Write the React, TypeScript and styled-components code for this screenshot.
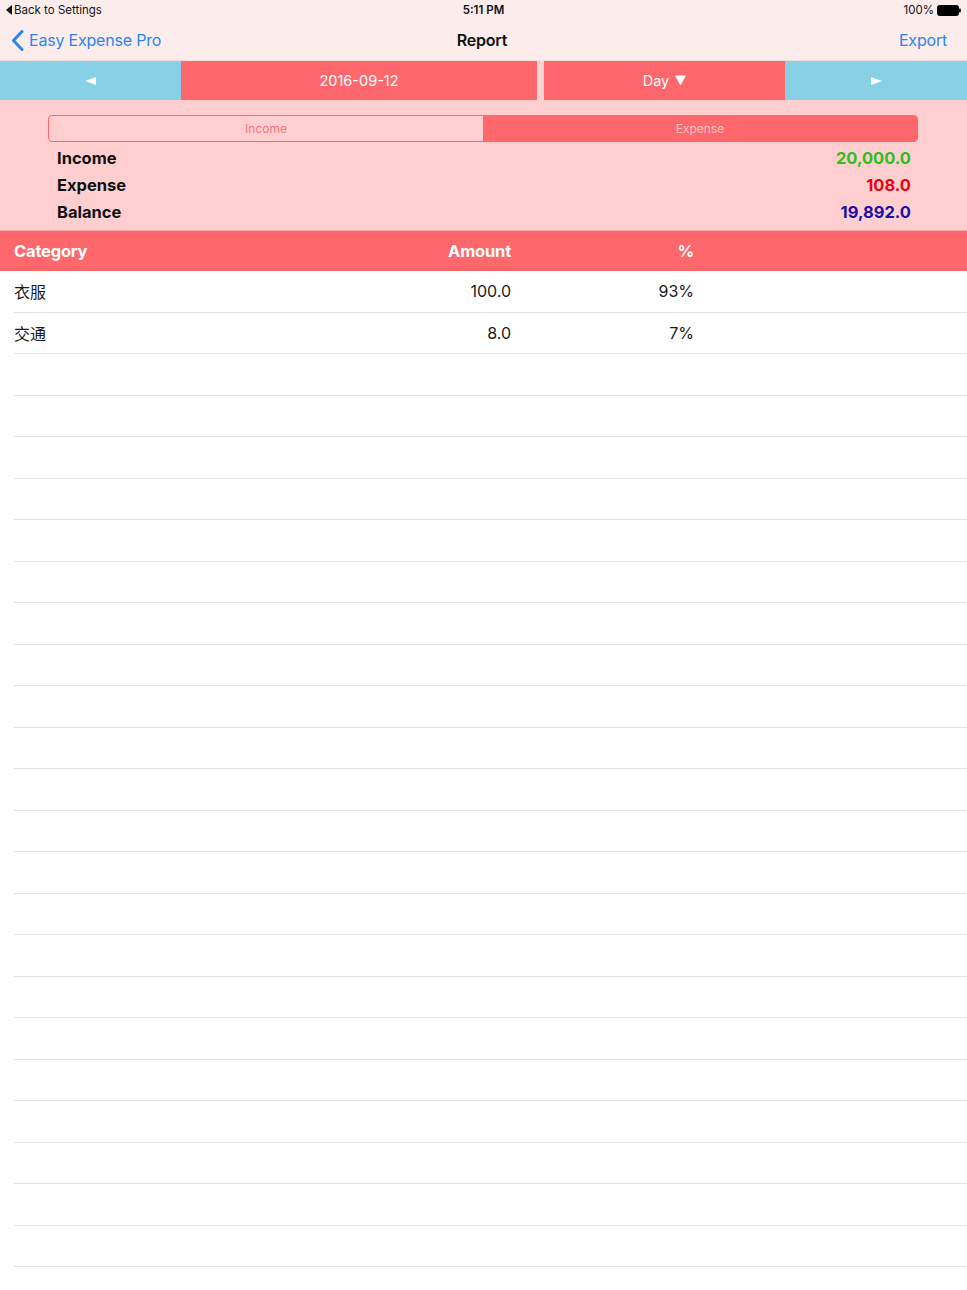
import React from 'react'
import styled, { createGlobalStyle } from 'styled-components'

const GlobalStyle = createGlobalStyle`
  body {
    margin: 0;
    background: #fff;
    font-family: Inter, "Noto Sans", "Noto Sans CJK SC", sans-serif;
    color: #111;
  }
`

const RED = '#fe686c'
const BLUE = '#87d0e5'
const TINT = '#2b85ec'

const categories = [
  { name: '衣服', amount: '100.0', percent: '93%' },
  { name: '交通', amount: '8.0', percent: '7%' },
]

const EMPTY_ROWS = 22

const Page = styled.div`
  width: 967px;
  min-height: 1290px;
  background: #fff;
`

const Header = styled.header`
  background: #fdecec;
  border-bottom: 1px solid #f3dede;
`

const StatusBar = styled.div`
  height: 20px;
  display: grid;
  grid-template-columns: 1fr auto 1fr;
  align-items: center;
  padding: 0 6px 0 6px;
  font-size: 11.5px;
  color: #111;
`

const StatusLeft = styled.div`
  display: flex;
  align-items: center;
  gap: 2px;
`

const StatusTime = styled.div`
  font-weight: 600;
`

const StatusRight = styled.div`
  display: flex;
  justify-content: flex-end;
  align-items: center;
  gap: 3px;
`

const NavBar = styled.div`
  height: 40px;
  display: grid;
  grid-template-columns: 1fr auto 1fr;
  align-items: center;
  padding: 0 20px 0 11px;
  font-size: 16px;
  letter-spacing: -0.2px;
`

const NavBack = styled.div`
  display: flex;
  align-items: center;
  gap: 5px;
  color: ${TINT};
`

const NavTitle = styled.div`
  font-weight: 600;
  margin-left: 6px;
`

const NavAction = styled.div`
  justify-self: end;
  color: ${TINT};
`

const Toolbar = styled.div`
  height: 39px;
  display: flex;
  background: #ffd2d2;
`

const BarButton = styled.div<{ $tone: 'blue' | 'red'; $width?: number; $gap?: number }>`
  display: flex;
  align-items: center;
  justify-content: center;
  gap: 6px;
  background: ${(p) => (p.$tone === 'blue' ? BLUE : RED)};
  color: #fff;
  font-size: 14.5px;
  ${(p) => (p.$width ? `width: ${p.$width}px;` : 'flex: 1;')}
  margin-left: ${(p) => p.$gap ?? 0}px;
`

const Summary = styled.section`
  background: #ffcfd0;
  padding: 15px 56px 5px 48px;
  border-bottom: 1px solid #f4a9ab;
`

const Segments = styled.div`
  display: grid;
  grid-template-columns: 1fr 1fr;
  width: 870px;
  height: 27px;
  border: 1px solid ${RED};
  border-radius: 4px;
  overflow: hidden;
  box-sizing: border-box;
  margin-bottom: 2px;
`

const Segment = styled.div<{ $active?: boolean }>`
  display: flex;
  align-items: center;
  justify-content: center;
  font-size: 12px;
  background: ${(p) => (p.$active ? RED : 'transparent')};
  color: ${(p) => (p.$active ? '#ffc2c4' : '#f0787b')};
`

const SummaryRow = styled.div`
  display: flex;
  justify-content: space-between;
  align-items: center;
  height: 27px;
  padding-left: 9px;
  font-size: 16.5px;
  font-weight: 700;
`

const SummaryValue = styled.span<{ $color: string }>`
  color: ${(p) => p.$color};
`

const TableGrid = styled.div`
  display: grid;
  grid-template-columns: 397px 100px 183px 1fr;
  align-items: center;
`

const TableHead = styled(TableGrid)`
  height: 40px;
  padding-left: 14px;
  background: ${RED};
  color: #fff;
  font-size: 16.5px;
  font-weight: 700;
  letter-spacing: -0.2px;
`

const Row = styled(TableGrid)`
  height: 41.5px;
  margin-left: 14px;
  border-bottom: 1px solid #e2e2e2;
  box-sizing: border-box;
  font-size: 16px;
  color: #1a1a1a;
`

const Num = styled.span`
  text-align: right;
`

const Battery = () => (
  <svg width="24" height="11" viewBox="0 0 24 11">
    <rect x="0.5" y="0.5" width="21" height="10" rx="2" fill="#000" stroke="#000" />
    <rect x="22" y="3.5" width="1.8" height="4" rx="0.8" fill="#000" />
  </svg>
)

const BackTriangle = () => (
  <svg width="6" height="10" viewBox="0 0 6 10">
    <path d="M6 0 L0 5 L6 10 Z" fill="#111" />
  </svg>
)

const Chevron = () => (
  <svg width="13" height="21" viewBox="0 0 13 21">
    <path d="M11 1.5 L2.5 10.5 L11 19.5" fill="none" stroke={TINT} strokeWidth="3" strokeLinecap="round" strokeLinejoin="round" />
  </svg>
)

const Arrow = ({ dir }: { dir: 'left' | 'right' }) => (
  <svg width="11" height="8" viewBox="0 0 11 8">
    {dir === 'left' ? <path d="M0 4 L11 0 L11 8 Z" fill="#fff" /> : <path d="M11 4 L0 0 L0 8 Z" fill="#fff" />}
  </svg>
)

const DownTriangle = () => (
  <svg width="11" height="11" viewBox="0 0 11 11">
    <path d="M0 0.5 L11 0.5 L5.5 10.5 Z" fill="#fff" />
  </svg>
)

export default function App() {
  return (
    <Page>
      <GlobalStyle />
      <Header>
        <StatusBar>
          <StatusLeft>
            <BackTriangle />
            <span>Back to Settings</span>
          </StatusLeft>
          <StatusTime>5:11 PM</StatusTime>
          <StatusRight>
            <span>100%</span>
            <Battery />
          </StatusRight>
        </StatusBar>
        <NavBar>
          <NavBack>
            <Chevron />
            <span>Easy Expense Pro</span>
          </NavBack>
          <NavTitle>Report</NavTitle>
          <NavAction>Export</NavAction>
        </NavBar>
      </Header>

      <Toolbar>
        <BarButton $tone="blue" $width={181}>
          <Arrow dir="left" />
        </BarButton>
        <BarButton $tone="red" $width={356}>2016-09-12</BarButton>
        <BarButton $tone="red" $width={241} $gap={7}>
          Day <DownTriangle />
        </BarButton>
        <BarButton $tone="blue">
          <Arrow dir="right" />
        </BarButton>
      </Toolbar>

      <Summary>
        <Segments>
          <Segment>Income</Segment>
          <Segment $active>Expense</Segment>
        </Segments>
        <SummaryRow>
          <span>Income</span>
          <SummaryValue $color="#2cbf1d">20,000.0</SummaryValue>
        </SummaryRow>
        <SummaryRow>
          <span>Expense</span>
          <SummaryValue $color="#ee0010">108.0</SummaryValue>
        </SummaryRow>
        <SummaryRow>
          <span>Balance</span>
          <SummaryValue $color="#1c0ea8">19,892.0</SummaryValue>
        </SummaryRow>
      </Summary>

      <TableHead>
        <span>Category</span>
        <Num>Amount</Num>
        <Num>%</Num>
        <span />
      </TableHead>
      {categories.map((c) => (
        <Row key={c.name}>
          <span>{c.name}</span>
          <Num>{c.amount}</Num>
          <Num>{c.percent}</Num>
          <span />
        </Row>
      ))}
      {Array.from({ length: EMPTY_ROWS }).map((_, i) => (
        <Row key={`empty-${i}`} />
      ))}
    </Page>
  )
}
